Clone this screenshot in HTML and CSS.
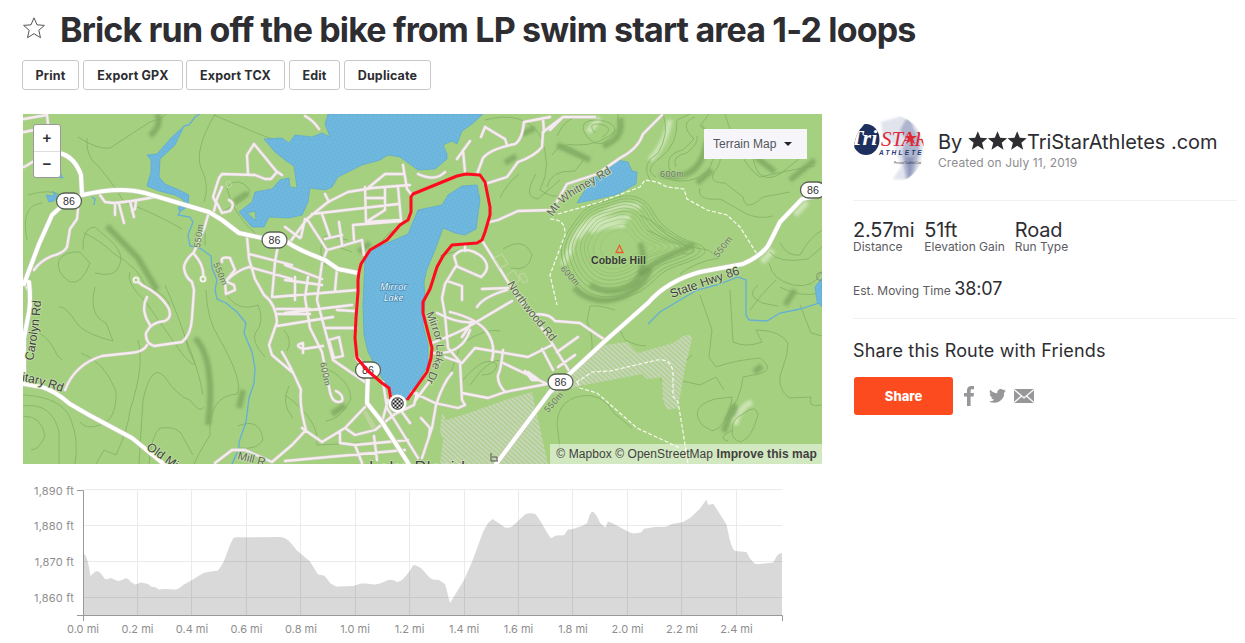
FILE: index.html
```html
<!DOCTYPE html>
<html lang="en">
<head>
    <meta charset="UTF-8">
    <meta name="viewport" content="width=device-width, initial-scale=1.0">
    <title>Brick run off the bike from LP swim start area 1-2 loops</title>
    <link rel="stylesheet" href="styles.css">
</head>
<body>
    <header class="heading">
        <svg class="star" viewBox="0 0 24 24"><path d="M12 1.800l3 7 7.400.600-5.600 4.900 1.700 7.400-6.500-4-6.500 4 1.700-7.400L1.600 9.400 9 8.800z"/></svg>
        <h1>Brick run off the bike from LP swim start area 1-2 loops</h1>
    </header>
    <nav class="actions">
        <button class="btn print">Print</button>
        <button class="btn gpx">Export GPX</button>
        <button class="btn tcx">Export TCX</button>
        <button class="btn edit">Edit</button>
        <button class="btn duplicate">Duplicate</button>
    </nav>

    <main class="content">
        <section class="route">
            <div class="map">
                <svg class="map-canvas" viewBox="23 114 799 350">
                    <defs>
                        <pattern id="hatch" width="3.500" height="3.500" patternUnits="userSpaceOnUse" patternTransform="rotate(-48)">
                            <rect width="3.500" height="3.500" fill="#abd08a"/>
                            <rect width="2.100" height="3.500" fill="#c9d5b9"/>
                        </pattern>
                        <pattern id="water" width="8" height="8" patternUnits="userSpaceOnUse">
                            <rect width="8" height="8" fill="#6cb5dd"/>
                            <path d="M1 2h1M5 1h1M3 5h1M7 6h1M1 7h1" stroke="#80c1e3"/>
                        </pattern>
                        <pattern id="checks" width="4" height="4" patternUnits="userSpaceOnUse" patternTransform="translate(-1 -1)">
                            <rect width="4" height="4" fill="#fff"/>
                            <path d="M0 0h2v2H0zM2 2h2v2H2z" fill="#111"/>
                        </pattern>
                        <filter id="soft" x="-30%" y="-30%" width="160%" height="160%"><feGaussianBlur stdDeviation="1.800"/></filter>
                        <path id="knob" d="M562 258C558 242 572 226 580 215S602 203 616 198S645 197 652 210S665 228 678 236S703 243 705 250S684 263 671 268S650 288 635 294S604 303 590 297S566 276 562 258z"/>
                        <path id="streets" d="M24 119L35 117L47 115L48 124M24 132L34 130M24 167L36 160M78 209L77 219L70 229L67 247Q64 253 52 256Q40 261 34 270M24 282L29 292M100 195L105 202L114 203L132 201L155 197M115 204V215M119 204L124 223M130 201L134 217M136 201L135 209L132 211M209 212L204 229L194 252Q184 261 184 268Q185 277 192 282L194 290L192 318Q191 335 182 342L154 346Q145 343 146 333Q151 322 165 321Q173 317 168 307Q160 294 142 285L136 280M194 254Q205 266 203 279M147 297Q140 310 150 325M147 345Q144 352 130 353L102 356Q75 364 65 390M214 211L216 203L213 197L219 178L222 174L255 175L265 179L271 179L277 172L254 144L247 155L248 174M276 171L282 175M222 187L216 201L222 213L230 211Q236 204 229 200M247 237L249 259L255 279L264 295Q276 304 277 322L269 345L272 355L292 372M279 240L275 262L272 297M249 254L292 265M225 282Q237 270 249 267L292 279M222 262Q220 256 230 258L235 270L225 282L226 294L235 290L234 285L225 281M274 297L357 290M277 309H310M276 314H310M277 326L333 317M285 313L352 305M215 463L232 450L245 450L272 462L292 445L306 430Q299 405 301 390Q290 365 282 352M302 428L322 442L345 428L365 407M285 461L405 450M290 242L307 219L328 202L348 192L372 188L410 185M403 165L407 189L412 195M403 174L385 174L368 188M312 214L398 204M365 187L366 222L385 210V188M398 187L401 220L366 222M366 198H385M401 221L353 225L354 240M307 219L327 250L345 245L362 240L364 255M322 214L330 237M325 239L342 235M339 222L342 244M327 250L322 263L317 300L325 330L333 360L365 382M325 194L329 202M285 227L300 238M305 219L301 237M285 265L322 279M337 269L335 290M285 280L322 285M295 277V300M308 277L305 298L310 328L322 352L330 392Q333 405 342 401Q344 395 336 391M325 328H356M323 346L303 349Q293 345 303 343L303 353M329 340L339 337L343 356L334 358zM337 310L354 311M383 382L387 408L418 458M345 428L355 435L375 430L395 414L414 405L417 393M340 431V443L355 445L408 440M355 445L362 463M374 436L377 460M388 400L382 422M412 392L435 403L458 408L465 405L462 400L460 362L448 348L445 315L442 298L445 284L456 266L481 277Q493 267 481 256Q464 244 454 256L457 266M465 246V251M447 281L462 286V300M432 343Q458 333 468 327L512 301M450 312Q478 319 487 332Q496 345 492 360M433 353Q462 355 470 330M472 322L462 337M445 357L462 363L475 348L528 357L552 345M503 350Q501 370 498 375Q497 383 505 392M462 393L488 398L505 392L547 384M503 363L522 372L547 384M525 371L532 380H539L528 372M542 349L553 370M477 307Q483 297 507 290M482 289L508 288M452 373Q443 383 436 405L432 428L422 458M421 418L430 428L429 437M402 412L410 423M429 382L415 401M437 313Q459 324 472 322M470 141L457 159M463 150L465 172M418 174Q435 182 445 172M305 116Q314 121 319 129M485 127L481 137M485 127L505 139L507 145M550 117L524 122Q522 140 515 144Q490 149 483 158L477 174M563 117L543 132L542 147Q535 156 518 162L507 177L485 184M543 118L544 132M595 117H563L550 130M662 115L643 134Q638 149 620 158L597 174L567 184L552 210L518 211L498 220L490 222M483 242L518 298Q532 315 547 335L571 374M532 315Q548 312 555 321L580 323L605 340M557 352L578 337M558 367L575 355"/>
                        <path id="highways" d="M24 284L39 244L52 215L65 203L82 195Q120 186 145 193L209 212L222 220L239 233L262 238L285 240Q293 248 325 260L338 269L358 273M49 153Q72 150 81 175L82 195M29 282Q31 300 29 312L24 338V384L42 387Q55 391 70 404L89 415L132 438L165 465M357 358L368 371L367 403L382 422L410 466M822 195L802 199L780 222L770 242Q765 254 743 264L700 272Q667 281 648 303L605 341L550 392L496 464"/>
                        <g id="shield">
                            <rect x="-12.500" y="-8" width="25" height="16" rx="8"/>
                            <text y="4">86</text>
                        </g>
                    </defs>

                    <rect class="land" x="23" y="114" width="799" height="350"/>

                    <g class="shade" filter="url(#soft)">
                        <path d="M157 114Q163 124 150 136M107 226L138 258L157 290M195 338Q216 360 208 425M640 275Q655 260 694 245M660 174Q700 185 707 140M557 145L590 160M735 417Q737 390 724 432M243 390L239 408M248 193L234 202M370 243L359 252M795 290L785 305M603 146Q625 138 620 118M756 157L775 172M535 128L522 134M516 156L505 163M754 372L762 366M345 405L332 414M697 183L712 170M790 180L815 160"/>
                        <path d="M574 288Q594 307 622 297Q645 286 650 268" stroke-width="13"/>
                        <path d="M590 285Q614 299 636 281Q648 264 640 243" stroke-width="9"/>
                    </g>
                    <g class="glow" filter="url(#soft)">
                        <path d="M569 254Q575 225 602 215Q620 202 640 207M650 160Q665 145 670 120M735 425Q738 408 752 402M773 250L762 262M807 202L795 215M588 132L600 118"/>
                        <path d="M578 238Q588 219 630 217M563 265L570 250M590 232Q605 223 625 225"/>
                    </g>

                    <g class="contour">
                        <path d="M78 137Q98 150 110 148Q136 131 150 122Q164 118 166 114M87 138Q86 151 92 160Q108 175 124 202Q155 213 182 229M28 195Q50 188 63 196M27 240Q20 205 42 203M84 233Q100 240 113 253Q139 268 145 285Q168 295 170 307M83 250Q82 227 95 227L113 243Q125 256 119 266Q116 278 95 273M59 260Q65 251 80 252L90 263Q82 285 70 282Q55 272 59 260M130 272Q125 282 145 301L183 355Q197 370 194 361Q187 350 186 340M95 287Q88 315 106 323L113 341Q88 335 78 325Q65 305 59 307M38 332Q51 340 57 355L62 360M81 353Q104 361 116 391Q117 420 100 425Q85 430 80 422M96 464L104 450L116 455Q128 430 130 410Q145 365 138 340M139 464L143 400Q151 363 164 376Q178 397 190 400Q200 414 204 407M149 464Q151 435 160 428Q180 425 184 439L193 455M23 406Q52 402 59 432V464M23 395Q63 397 71 420Q79 440 75 464M23 416Q42 416 45 436Q39 450 31 450M165 285Q178 315 185 337Q199 370 203 395M206 290Q207 320 219 338Q244 382 237 394Q208 396 210 435Q196 458 194 464M225 292Q237 313 258 305Q265 322 256 332Q250 340 265 357M202 225Q206 222 205 245M215 114Q194 150 201 168Q210 185 204 202M214 115Q260 135 290 146M227 188Q232 214 260 238M225 210Q247 200 250 190Q238 175 227 187M238 426Q260 417 263 440Q257 450 240 448M284 330Q293 340 287 351M289 386Q280 403 293 418M285 395Q320 420 317 445L360 443M324 367Q351 380 351 399Q340 420 326 421M348 240L325 236Q316 252 326 266M352 252L338 247M395 230Q384 234 380 247M450 375L461 344Q487 327 500 331M470 385L480 372Q497 355 503 363M463 380Q486 353 497 365Q495 375 482 375M485 120Q523 110 540 135Q553 165 540 190Q553 199 561 195M536 174Q522 197 538 199L560 180M503 249Q524 236 532 255Q529 272 511 268M519 174Q507 183 500 198M440 256L460 250M470 440Q475 423 490 418L510 402M500 450L515 442Q525 430 523 403"/>
                        <path d="M547 187Q550 170 575 171L585 158Q570 145 558 145M552 155Q560 142 576 145Q600 146 618 129V114M557 136Q565 118 578 117M587 137Q575 119 600 120Q625 125 608 140Q598 149 587 137M595 133Q586 123 600 124Q616 128 602 137M650 180Q640 164 658 153Q670 133 663 114M665 178Q690 187 708 171Q721 150 702 125M656 177Q643 170 660 158Q678 145 677 120L690 114M670 171Q664 154 683 150L694 139Q678 123 695 117M676 167Q671 156 687 153Q699 143 697 136M709 114L700 126Q730 146 717 168Q705 183 725 183L743 197Q745 213 763 197L790 192M725 114Q740 164 760 177Q790 170 815 166M753 158Q758 186 780 174L800 158M700 188Q696 201 720 199L745 213Q758 220 773 216M647 230Q660 236 672 242L693 248Q699 254 681 254M640 215Q659 224 667 235Q684 247 708 250L719 258Q695 262 680 274M780 243Q788 257 800 255Q810 237 822 230M770 252Q778 264 808 259L822 247M769 263Q772 280 793 285Q815 289 822 271M776 280Q760 295 750 310M780 287Q800 298 820 293M758 285Q745 295 762 303L778 306M700 295L712 330L709 357L716 367Q736 360 760 358Q776 370 758 374L743 377Q741 400 724 419M730 290L733 342Q746 348 762 342L756 330Q780 330 788 343Q788 355 783 367Q774 386 789 398L811 397Q807 408 822 405M800 305L811 333L822 336M640 352L653 363Q677 350 686 361L692 355M560 450L557 424Q558 400 581 396Q602 392 614 413L632 428M660 380Q678 379 700 385L716 377L724 390M702 425Q688 407 715 399L732 397Q728 427 712 431L702 425M732 431Q732 418 743 414Q756 403 758 415Q752 438 741 442Q732 440 732 431M733 430Q716 438 728 441M615 310Q600 305 590 306L587 321Q600 351 580 390M618 326L625 340Q637 346 646 346"/>
                        <use href="#knob"/>
                        <use href="#knob" transform="translate(37 14.500) scale(.94)"/>
                        <use href="#knob" transform="translate(80 31) scale(.87)"/>
                        <use href="#knob" transform="translate(123 48) scale(.8)"/>
                        <use href="#knob" transform="translate(166 65) scale(.73)"/>
                        <use href="#knob" transform="translate(210 82) scale(.66)"/>
                        <use href="#knob" transform="translate(253 99) scale(.59)"/>
                        <use href="#knob" transform="translate(296 117) scale(.52)"/>
                        <use href="#knob" transform="translate(352 140) scale(.43)"/>
                        <use href="#knob" transform="translate(415 165) scale(.33)"/>
                    </g>

                    <g class="urban">
                        <path d="M442 413L446 420L469 413L505 400L532 392L548 464H440L443 440L440 431z"/>
                        <path d="M552 390L605 345L627 342L638 353L673 343L683 336Q691 333 692 339L685 368L678 408L667 410L663 400L662 377L647 379L642 374L580 386L553 394z"/>
                    </g>

                    <g class="stream">
                        <path d="M184 126L189 125L195 117L200 114M180 212L178 215L190 217L193 222L188 235L190 246L200 248L211 256L212 268L217 280L215 290L217 299L226 303L237 312L246 323L244 333L252 352L255 368L254 383L249 398L246 422L239 442V448L232 464M48 200L56 196M92 197L95 199L94 205M648 324L660 312L680 300L697 290L717 285L738 277L746 280V315L749 320L767 321L780 313L800 309L822 302"/>
                    </g>
                    <g class="water">
                        <path d="M184 126L175 145L160 159L159 177L165 184L179 190L189 195L188 206L180 212L178 208L184 200L175 195L159 191L147 186L151 172V160L147 155L157 154L172 137z"/>
                        <path d="M46 195L55 196L52 191L58 195L54 201L49 202zM60 172L63 178H60z"/>
                        <path fill-rule="evenodd" d="M328 114H483L472 124L462 131L457 144L452 141L443 145L447 154V159L435 169L418 170L400 157L388 155L380 160L362 165L338 177L332 187L325 190L310 188L308 202L302 215L289 218L269 217L264 227L252 227L239 212L252 202L255 192L272 189L280 180L289 178L290 187L297 188L294 166L285 160L275 152L264 139L282 138L289 143L295 135L312 137L322 133L330 137L325 124zM247 213L256 221L255 211z"/>
                        <path d="M477 185L480 200L476 229L465 235L455 233L443 228L438 242L433 255L427 269L424 282L425 300L423 325L428 345V365L418 382L407 400L395 398L382 378L368 352L364 335L363 305L365 259L372 249L385 244L408 234L413 222L418 210L442 205L448 195L462 186z"/>
                        <path d="M577 203L585 190L583 184L605 168L617 160L628 162L632 171L637 172L636 184L618 194L593 200z"/>
                        <path d="M822 278L815 287L817 302L822 307z"/>
                    </g>

                    <g class="trail">
                        <path d="M558 214L600 202L640 187L645 180L657 182L667 187L684 189L687 199L707 210L727 215L740 227L757 254M550 219Q566 219 565 235L550 275L557 305M570 382H577L592 372L610 371L657 360Q671 358 673 372V396L678 402L683 432L688 464M577 382L580 388L597 393L637 428L680 448"/>
                    </g>
                    <use class="street-case" href="#streets"/>
                    <use class="street" href="#streets"/>
                    <use class="highway-case" href="#highways"/>
                    <use class="highway" href="#highways"/>
                    <circle class="ring" cx="136" cy="280" r="2.500"/>
                    <circle class="ring" cx="203" cy="279" r="2.500"/>
                    <path class="building" d="M494 258l8-4 6 10-8 4zM506 276l8-6 6 10-8 5zM519 275l5-2 4 8-5 2zM226 183l3-2 3 4-4 3z"/>
                    <path class="building-filled" d="M363 413L366 410L376 426L372 430z"/>

                    <defs>
                        <path id="carolyn" d="M33 361Q39 330 42 290"/>
                        <path id="military" d="M22 381Q42 384 70 395"/>
                        <path id="old-mill" d="M146 449Q162 460 190 480"/>
                        <path id="mill" d="M237 459L280 470"/>
                        <path id="mirror-dr" d="M426 313C435 337 440 348 434 362T422 392"/>
                        <path id="northwood" d="M507 284C521 308 538 325 560 352"/>
                        <path id="whitney" d="M553 217C565 194 588 191 622 165"/>
                        <path id="hwy" d="M672 298Q704 286 755 269"/>
                    </defs>
                    <g class="road-name">
                        <text><textPath href="#carolyn">Carolyn Rd</textPath></text>
                        <text><textPath href="#military">itary Rd</textPath></text>
                        <text><textPath href="#old-mill">Old Mi</textPath></text>
                        <text class="minor"><textPath href="#mill">Mill R</textPath></text>
                        <text class="minor"><textPath href="#mirror-dr">Mirror Lake Dr</textPath></text>
                        <text class="minor"><textPath href="#northwood">Northwood Rd</textPath></text>
                        <text class="minor"><textPath href="#whitney">Mt Whitney Rd</textPath></text>
                        <text><textPath href="#hwy">State Hwy 86</textPath></text>
                    </g>
                    <g class="height">
                        <text transform="translate(200 248) rotate(-82)">550m</text>
                        <text transform="translate(213 264) rotate(67)">550m</text>
                        <text transform="translate(320 363) rotate(78)">600m</text>
                        <text transform="translate(660 177)">600m</text>
                        <text transform="translate(560 269) rotate(48)">600m</text>
                        <text transform="translate(718 258) rotate(-52)">550m</text>
                        <text transform="translate(548 413) rotate(-48)">550m</text>
                    </g>
                    <text class="lake-name" x="393.500" y="290">Mirror</text>
                    <text class="lake-name" x="393.500" y="301">Lake</text>
                    <path class="peak" d="M619.500 245.500L623 252.500H616z"/>
                    <text class="hill-name" x="618.500" y="264">Cobble Hill</text>
                    <text class="town" x="369" y="473">Lake Placid</text>
                    <path class="windmill" d="M491 453v8h7M492 457h5v4"/>

                    <g class="shields">
                        <use href="#shield" x="69" y="201"/>
                        <use href="#shield" x="274.500" y="240"/>
                        <use href="#shield" x="368" y="370"/>
                        <use href="#shield" x="560.500" y="382"/>
                        <use href="#shield" x="813" y="190"/>
                    </g>
                    <circle class="bay" cx="820.500" cy="276.500" r="4"/>

                    <path class="track" d="M391 400L389 388L382 383L368 371L357 358L355 338L356 318L358 292V280L359 272L361 264L370 250L387 240L400 225L408 220L411 212V197L413 194L457 176L466 174L480 175L485 182L490 207V215L485 232L482 240L477 243L452 245L443 256L437 267L430 289L423 302V313L432 348L431 358L427 372L407 400"/>
                    <g transform="translate(397.500 403.500)">
                        <circle r="9" fill="#fff"/>
                        <circle r="6" fill="url(#checks)" stroke="#222" stroke-width=".6"/>
                    </g>
                </svg>
                <div class="zoom">
                    <button class="zoom-btn">+</button>
                    <button class="zoom-btn">−</button>
                </div>
                <button class="map-type">Terrain Map <span class="caret"></span></button>
                <p class="attribution">© Mapbox © OpenStreetMap <b>Improve this map</b></p>
            </div>

            <svg class="chart" viewBox="23 482 799 161">
                <path class="grid" d="M84 489.500H782.500M84 525.500H782.500M84 561.500H782.500M84 597.500H782.500M137.500 489V615M191.500 489V615M246.500 489V615M300.500 489V615M355.500 489V615M409.500 489V615M464.500 489V615M518.500 489V615M572.500 489V615M627.500 489V615M681.500 489V615M736.500 489V615"/>
                <path class="profile" d="M83 553Q86 555 87 559L89 567L90.500 576L94 572.500Q97 570 100 572.500L105 579Q108 579.500 111 578Q114 579.500 118 581Q122 580.500 126 578Q129 579 131 582L135 584.500L141 582.500L148 584L152 587H155L159 589.500L164 589L176 589.500Q180 588.500 183 585L192 580L200 575Q204 572 208 572L218 570.500Q221 567 224 561L230 545L233 538.500Q235 537 238 537.300L280 537Q286 537.500 290 542L297 550.500L310 561.500L318 574.500L324 575.500Q327 578 330 583L336 586.500L353 586L361 583.500H366L375 584.500L380 583.500L388 580H393L397 582Q400 582 403 579L409 572L413 565.500L415 565L421 568L430 578L433 579.500L439 580L445 584L447.500 593L450 603L464 580L472 562L483 532L488 523L492.500 519L497 522L505 527.500Q508 528.500 512 526.500L525 514.500Q530 512.500 535.500 514L541 522L547 532.500L551 538.300L556 535.500L564 535.300L568 529.500L573 529L583 525.500L587 523.300L590 514.300Q592 510.500 594 512.500L597 516.500L600.500 523.500L605.500 527.500L608 521.600L612 523L630 532.500L634 533.500L641 532.500L644 528.700L655 527L666 526.700L672 524L683 522L690 518L700 508.500L706.500 499.500L708 504.700L713.500 504L726.500 524.500L729.500 538.500Q732 549 735 551L746.500 552L750 558.500L754.500 563.500L758 564.300L773.500 562.500Q777 554 780 553.500L782 553V615H83z"/>
                <path class="axis" d="M77 490.500H83.500V621M77 615.500H782.500V621"/>
                <g class="y-labels">
                    <text x="74" y="495">1,890 ft</text>
                    <text x="74" y="530">1,880 ft</text>
                    <text x="74" y="566">1,870 ft</text>
                    <text x="74" y="602">1,860 ft</text>
                </g>
                <g class="x-labels">
                    <text x="83" y="633">0.0 mi</text>
                    <text x="137.500" y="633">0.2 mi</text>
                    <text x="192" y="633">0.4 mi</text>
                    <text x="246.500" y="633">0.6 mi</text>
                    <text x="301" y="633">0.8 mi</text>
                    <text x="355" y="633">1.0 mi</text>
                    <text x="409.500" y="633">1.2 mi</text>
                    <text x="464" y="633">1.4 mi</text>
                    <text x="518.500" y="633">1.6 mi</text>
                    <text x="573" y="633">1.8 mi</text>
                    <text x="627.500" y="633">2.0 mi</text>
                    <text x="682" y="633">2.2 mi</text>
                    <text x="736.500" y="633">2.4 mi</text>
                </g>
            </svg>
        </section>

        <aside class="sidebar">
            <div class="author">
                <svg class="avatar" viewBox="0 0 70 70">
                    <defs>
                        <clipPath id="round"><circle cx="35" cy="35" r="35"/></clipPath>
                        <filter id="haze"><feGaussianBlur stdDeviation=".8"/></filter>
                    </defs>
                    <g clip-path="url(#round)">
                        <g filter="url(#haze)">
                            <path d="M27 8L48 2L63 12L70 30L66 52L56 66L39 65L47 53L40 30L29 22z" fill="#e1e4ed"/>
                            <path d="M52 5Q58 5 59 13L66 27L64 43L61 57L56 65H52L50 54L48 37L52 26L46 16z" fill="#aeb5ce"/>
                            <path d="M51 43L54 55V63L57 61L60 43z" fill="#8d97bb"/>
                        </g>
                        <ellipse cx="12" cy="25.500" rx="13.500" ry="15.500" fill="#1c2f5e"/>
                        <ellipse cx="0" cy="12" rx="8" ry="3.500" fill="#fff"/>
                        <text class="logo-tri" x="-4" y="31">Tri</text>
                        <text class="logo-star" x="27" y="31.500">STAR</text>
                        <path d="M56 17L58 22H63L59 25L61 30L56 27L52 30L54 25L51 22H55z" fill="#e12837"/>
                        <text class="logo-athlete" x="25" y="41">ATHLETE</text>
                        <text class="logo-note" x="40" y="50">Personal Triathlon Coach</text>
                    </g>
                </svg>
                <div class="author-text">
                    <h2>By <span class="stars"><svg viewBox="0 0 60 20"><path id="s" d="M10 0l2.700 6.800 7.100.4-5.500 4.600 1.800 7-6.100-3.900-6.100 3.900 1.800-7L.2 7.200l7.100-.4z"/><use href="#s" x="20"/><use href="#s" x="40"/></svg></span>TriStarAthletes .com</h2>
                    <p>Created on July 11, 2019</p>
                </div>
            </div>
            <div class="stats">
                <dl class="stat-row">
                    <div class="stat"><dd>2.57mi</dd><dt>Distance</dt></div>
                    <div class="stat"><dd>51ft</dd><dt>Elevation Gain</dt></div>
                    <div class="stat"><dd>Road</dd><dt>Run Type</dt></div>
                </dl>
                <p class="moving">Est. Moving Time <strong>38:07</strong></p>
            </div>
            <div class="share">
                <h3>Share this Route with Friends</h3>
                <div class="share-row">
                    <button class="share-btn">Share</button>
                    <svg class="icon-facebook" viewBox="0 0 10 20"><path d="M3 20V10.500H0V7h3V4.500C3 1.500 4.600 0 7.200 0H10v3.300H8C6.900 3.300 6.600 3.900 6.600 4.800V7H10l-.4 3.500h-3V20z"/></svg>
                    <svg class="icon-twitter" viewBox="0 0 24 20"><path d="M24 2.400a10 10 0 0 1-2.800.8A5 5 0 0 0 23.300.4a10 10 0 0 1-3.100 1.200 4.900 4.900 0 0 0-8.400 4.500A14 14 0 0 1 1.700 1a4.900 4.900 0 0 0 1.500 6.500A5 5 0 0 1 1 6.900a5 5 0 0 0 3.900 4.900 5 5 0 0 1-2.200.1 4.900 4.900 0 0 0 4.600 3.400A10 10 0 0 1 0 17.400a14 14 0 0 0 21.500-12.500A10 10 0 0 0 24 2.400z"/></svg>
                    <svg class="icon-mail" viewBox="0 0 20 14"><rect width="20" height="14"/><path d="M0 .5L10 9L20 .5M0 13.500L7.500 7M20 13.500L12.500 7"/></svg>
                </div>
            </div>
        </aside>
    </main>
</body>
</html>
```
FILE: styles.css
```css
* {
    box-sizing: border-box;
}

body {
    margin: 0;
    height: 643px;
    padding: 10px 8px 0 22px;
    font-family: Inter, "Liberation Sans", sans-serif;
    color: #2d2d32;
    background: #fff;
    overflow: hidden;
}

h1, h2, h3, p, dl, dd {
    margin: 0;
}

button {
    font-family: inherit;
    color: inherit;
    padding: 0;
}

.heading {
    display: flex;
    height: 40px;
}

.star {
    width: 24px;
    height: 24px;
    margin: 6px 14px 0 0;
    fill: none;
    stroke: #55555a;
    stroke-width: 1;
}

h1 {
    font-size: 34px;
    line-height: 40px;
    font-weight: 700;
    letter-spacing: -.84px;
    white-space: nowrap;
}

.actions {
    display: flex;
    margin-top: 10px;
}

.btn {
    height: 30px;
    padding-top: 1px;
    background: #fff;
    border: 1px solid #c8c8cc;
    border-radius: 3px;
    font-size: 12.5px;
    font-weight: 700;
    letter-spacing: .15px;
}

.print { width: 57px; margin-right: 4px; }
.gpx { width: 100px; margin-right: 3px; }
.tcx { width: 99px; margin-right: 4px; }
.edit { width: 51px; margin-right: 4px; }
.duplicate { width: 87px; }

.content {
    display: flex;
    margin: 24px 0 0 1px;
    gap: 31px;
}

.route {
    width: 799px;
    flex: none;
}

/* Map */
.map {
    position: relative;
    height: 350px;
    overflow: hidden;
}

.map-canvas, .chart {
    display: block;
    width: 799px;
}

.land { fill: #a5d080; }

.shade path {
    fill: none;
    stroke: #5f8848;
    stroke-width: 6;
    opacity: .45;
}

.glow path {
    fill: none;
    stroke: #e0efcf;
    stroke-width: 6;
    opacity: .65;
}

.contour {
    fill: none;
    stroke: #82b063;
    stroke-width: .8;
}

.urban { fill: url(#hatch); }

.stream {
    fill: none;
    stroke: #64aed8;
    stroke-width: 1.3;
}

.water {
    fill: url(#water);
    stroke: #5ba8d4;
    stroke-width: .7;
}

.trail {
    fill: none;
    stroke: #f8faf3;
    stroke-width: 1.2;
    stroke-dasharray: 4 2;
}

.street-case, .street, .highway-case, .highway {
    fill: none;
    stroke-linecap: round;
    stroke-linejoin: round;
}

.street-case { stroke: #c9c9b9; stroke-width: 3.6; }
.street { stroke: #f4ecee; stroke-width: 2.3; }
.highway-case { stroke: #c4cdb1; stroke-width: 5.4; }
.highway { stroke: #fff; stroke-width: 4.1; }

.ring {
    fill: #a5d080;
    stroke: #f7f1f2;
    stroke-width: 2;
}

.building {
    fill: none;
    stroke: #c5d9a6;
}

.building-filled { fill: #bdd49c; }

.map-canvas text {
    font-family: "Liberation Sans", Arial, sans-serif;
    paint-order: stroke;
}

.road-name text {
    font-size: 12.2px;
    fill: #3e423b;
    stroke: #c9e1b1;
    stroke-width: 1.5;
}

.road-name .minor {
    font-size: 11.4px;
    fill: #5d6256;
}

.height text {
    font-size: 9px;
    letter-spacing: .4px;
    fill: #65725b;
    stroke: #b9d99d;
    stroke-width: 1;
}

.map-canvas .lake-name {
    font: italic 9.6px "Open Sans", sans-serif;
    text-anchor: middle;
    fill: #fff;
    stroke: #397fab;
    stroke-width: 1.2;
}

.peak {
    fill: none;
    stroke: #f15a29;
    stroke-width: 1.3;
}

.map-canvas .hill-name {
    font-size: 10.5px;
    font-weight: bold;
    text-anchor: middle;
    fill: #353c30;
    stroke: #b8d89e;
    stroke-width: 1;
}

.town {
    font-size: 17px;
    letter-spacing: .8px;
    fill: #444;
    stroke: #dce9ce;
    stroke-width: 1;
}

.windmill {
    fill: none;
    stroke: #555;
}

.shields {
    fill: #fff;
    stroke: #596252;
    stroke-width: 1.3;
}

#shield text {
    font-size: 10.6px;
    text-anchor: middle;
    fill: #333;
    stroke: none;
}

.bay {
    fill: none;
    stroke: #819474;
}

.track {
    fill: none;
    stroke: #ff0a1e;
    stroke-width: 3;
    stroke-linejoin: round;
}

.zoom {
    position: absolute;
    left: 10px;
    top: 10px;
    width: 28px;
    height: 54px;
    border: 1px solid #999;
    border-radius: 3px;
    background: #fff;
}

.zoom-btn {
    display: block;
    width: 100%;
    height: 26px;
    padding-bottom: 2px;
    background: none;
    border: 0;
    font: bold 15px "Liberation Sans", sans-serif;
    color: #333;
}

.zoom-btn + .zoom-btn {
    border-top: 1px solid #ddd;
}

.map-type {
    position: absolute;
    right: 15px;
    top: 15px;
    width: 103px;
    height: 30px;
    display: flex;
    align-items: center;
    padding-left: 9px;
    border: 0;
    background: #f5f5fa;
    font: 12px "Liberation Sans", sans-serif;
    color: #55555c;
}

.caret {
    margin-left: 8px;
    border: 4px solid transparent;
    border-top-color: #242428;
    border-bottom: 0;
}

.attribution {
    position: absolute;
    right: 0;
    bottom: 0;
    width: 272px;
    height: 20px;
    text-align: right;
    padding-right: 5px;
    background: rgba(255, 255, 255, .5);
    font: 12px/20px "Liberation Sans", sans-serif;
    letter-spacing: .07px;
    color: #3f3f3f;
    white-space: nowrap;
}

/* Elevation chart */
.chart {
    height: 161px;
    margin-top: 18px;
}

.grid {
    fill: none;
    stroke: #ebebeb;
}

.profile { fill: rgba(0, 0, 0, .15); }

.axis {
    fill: none;
    stroke: #999;
}

.chart text {
    font-size: 11px;
    fill: #8e8e8e;
}

.y-labels {
    text-anchor: end;
    letter-spacing: .2px;
}

.x-labels { text-anchor: middle; }

/* Sidebar */
.sidebar {
    width: 384px;
    flex: none;
}

.author {
    display: flex;
    height: 87px;
    border-bottom: 1px solid #f0f0f5;
}

.avatar {
    width: 70px;
    height: 70px;
    margin-left: 1px;
    flex: none;
}

.logo-tri, .logo-star {
    font: italic bold 20px "Liberation Serif", serif;
}

.logo-tri {
    font-size: 22px;
    fill: #fff;
}

.logo-star {
    font-size: 21px;
    font-weight: normal;
    fill: #e12837;
}

.logo-athlete {
    font: italic bold 6.5px "Liberation Sans", sans-serif;
    letter-spacing: 2.2px;
    fill: #273b70;
}

.logo-note {
    font: italic 2.6px "Liberation Sans", sans-serif;
    fill: #333;
}

.author-text {
    padding: 15px 0 0 14px;
}

h2 {
    font-size: 20px;
    line-height: 26px;
    font-weight: 400;
    letter-spacing: -.02px;
    white-space: nowrap;
}

.stars svg {
    width: 59px;
    height: 20px;
    vertical-align: -2px;
    fill: #2d2d32;
}

.author-text p {
    font-size: 12px;
    line-height: 16px;
    letter-spacing: .1px;
    color: #8d8d91;
}

.stats {
    height: 118px;
    padding-top: 18px;
    border-bottom: 1px solid #f0f0f5;
}

.stat-row {
    display: flex;
    gap: 10px;
}

.stat dd {
    font-size: 20px;
    line-height: 23px;
    letter-spacing: -.2px;
}

.stat {
    display: flex;
    flex-direction: column;
}

.stat dt, .moving {
    font-size: 12px;
    line-height: 10px;
    color: #5c5c61;
}

.moving {
    margin-top: 25px;
    line-height: 24px;
}

.moving strong {
    font-size: 18px;
    font-weight: 400;
    letter-spacing: -.1px;
    color: #2d2d32;
}

.share {
    padding-top: 19px;
}

h3 {
    font-size: 18px;
    line-height: 26px;
    font-weight: 400;
    letter-spacing: .17px;
}

.share-row {
    display: flex;
    align-items: center;
    margin: 13px 0 0 1px;
    height: 38px;
}

.share-row svg {
    fill: #97979a;
}

.share-btn {
    width: 99px;
    height: 38px;
    border: 0;
    border-radius: 3px;
    background: #fc4c1f;
    color: #fff;
    font-size: 13px;
    font-weight: 800;
}

.icon-facebook { width: 10px; height: 20px; margin-left: 11px; }
.icon-twitter { width: 17px; height: 14px; margin-left: 15px; }
.icon-mail { width: 20px; height: 14px; margin-left: 8px; }

.icon-mail path {
    fill: none;
    stroke: #fff;
    stroke-width: 1.3;
}
```
